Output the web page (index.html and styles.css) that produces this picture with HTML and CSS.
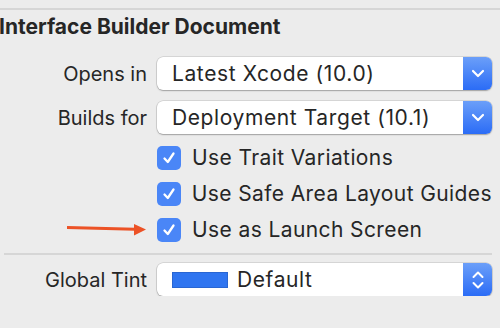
FILE: index.html
```html
<!DOCTYPE html>
<html lang="en">
<head>
<meta charset="UTF-8">
<title>Interface Builder Document</title>
<link rel="stylesheet" href="styles.css">
</head>
<body>
<div class="topline"></div>
<h1>Interface Builder Document</h1>

<div class="form first">
  <label class="lbl">Opens in</label>
  <div class="popup">
    <span class="value">Latest Xcode (10.0)</span>
    <span class="btn">
      <svg width="14" height="9" viewBox="0 0 14 9"><path d="M2 2 L7 7 L12 2" fill="none" stroke="#fff" stroke-width="2.2" stroke-linecap="round" stroke-linejoin="round"/></svg>
    </span>
  </div>

  <label class="lbl">Builds for</label>
  <div class="popup">
    <span class="value">Deployment Target (10.1)</span>
    <span class="btn">
      <svg width="14" height="9" viewBox="0 0 14 9"><path d="M2 2 L7 7 L12 2" fill="none" stroke="#fff" stroke-width="2.2" stroke-linecap="round" stroke-linejoin="round"/></svg>
    </span>
  </div>

  <span></span>
  <div class="check"><span class="box"><svg width="16" height="16" viewBox="0 0 16 16"><path d="M3.5 8.5 L6.8 12 L12.5 3.5" fill="none" stroke="#fff" stroke-width="2.3" stroke-linecap="round" stroke-linejoin="round"/></svg></span>Use Trait Variations</div>

  <span></span>
  <div class="check"><span class="box"><svg width="16" height="16" viewBox="0 0 16 16"><path d="M3.5 8.5 L6.8 12 L12.5 3.5" fill="none" stroke="#fff" stroke-width="2.3" stroke-linecap="round" stroke-linejoin="round"/></svg></span>Use Safe Area Layout Guides</div>

  <div class="pointer">
    <svg width="80" height="14" viewBox="0 0 80 14"><path d="M0 4.5 L68 6.2" stroke="#ec5226" stroke-width="3"/><path d="M67 1 L79 6.5 L67 12.5 Z" fill="#ec5226"/></svg>
  </div>
  <div class="check"><span class="box"><svg width="16" height="16" viewBox="0 0 16 16"><path d="M3.5 8.5 L6.8 12 L12.5 3.5" fill="none" stroke="#fff" stroke-width="2.3" stroke-linecap="round" stroke-linejoin="round"/></svg></span>Use as Launch Screen</div>
</div>

<div class="sep"></div>

<div class="form last">
  <label class="lbl">Global Tint</label>
  <div class="popup">
    <span class="swatch"></span>
    <span class="value">Default</span>
    <span class="btn">
      <svg width="14" height="22" viewBox="0 0 14 22"><path d="M2.5 8 L7 3.5 L11.5 8 M2.5 14 L7 18.5 L11.5 14" fill="none" stroke="#fff" stroke-width="2" stroke-linecap="round" stroke-linejoin="round"/></svg>
    </span>
  </div>
</div>
</body>
</html>
```

FILE: styles.css
```css
body {
  margin: 0;
  background: #ececec;
  color: #262626;
  font-family: Inter, "Noto Sans", sans-serif;
  font-size: 21px;
}
.topline {
  margin-top: 8px;
  height: 2px;
  background: #d6d6d6;
}
h1 {
  margin: 5px 0 0 -1px;
  font-size: 21px;
  font-weight: 700;
  line-height: 24px;
}
.form {
  display: grid;
  grid-template-columns: 147px 335px;
  column-gap: 10px;
  row-gap: 11px;
  align-items: center;
}
.form.first { margin-top: 18px; }
.form.last { margin-top: 8px; }
.lbl {
  text-align: right;
  font-size: 20px;
}
.popup {
  height: 33px;
  display: flex;
  align-items: center;
  background: #fff;
  border-radius: 6px;
  box-shadow: 0 0 0 0.5px rgba(0,0,0,0.18), 0 1px 1.5px rgba(0,0,0,0.25);
  overflow: hidden;
}
.value {
  flex: 1;
  padding-left: 15px;
  white-space: nowrap;
  letter-spacing: 0.6px;
}
.btn {
  width: 29px;
  align-self: stretch;
  display: flex;
  align-items: center;
  justify-content: center;
  background: linear-gradient(#6b9ff9, #2b6cf6);
}
.check {
  display: flex;
  align-items: center;
  gap: 11px;
  height: 25px;
  white-space: nowrap;
  letter-spacing: 0.4px;
}
.box {
  width: 24px;
  height: 24px;
  border-radius: 5px;
  background: #4a86f7;
  display: flex;
  align-items: center;
  justify-content: center;
}
.pointer {
  justify-self: end;
  display: flex;
}
.sep {
  margin: 11px 8px 0 4px;
  height: 2px;
  background: #d6d6d6;
}
.swatch {
  width: 56px;
  height: 16px;
  margin-left: 15px;
  background: #2f75f0;
  box-shadow: inset 0 0 0 1px rgba(0,0,0,0.12);
}
.swatch + .value { padding-left: 9px; }
```
